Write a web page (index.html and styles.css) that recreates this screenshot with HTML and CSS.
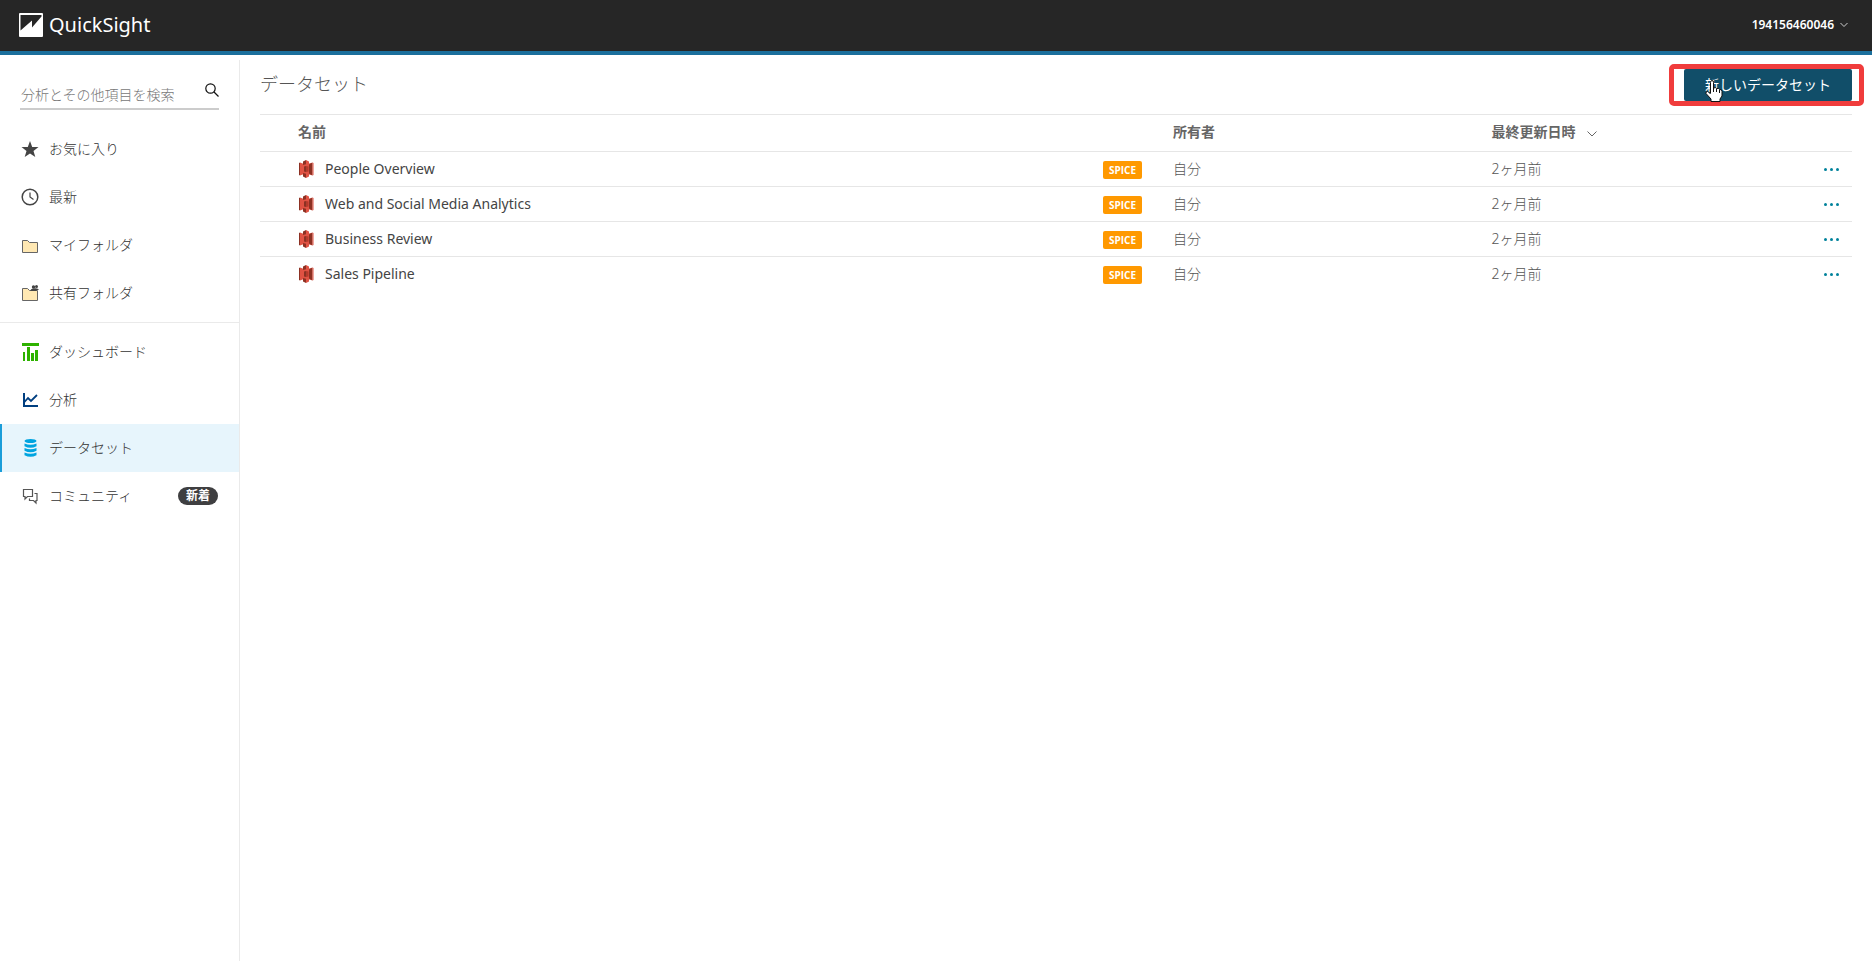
FILE: index.html
```html
<!DOCTYPE html>
<html lang="ja">
<head>
    <meta charset="utf-8" />
    <meta name="viewport" content="width=device-width, initial-scale=1" />
    <title>QuickSight</title>
    <link rel="stylesheet" href="styles.css">
</head>
<body>
    <svg width="0" height="0" class="defs">
        <symbol id="s3" viewBox="0 0 16 18">
            <path fill="#8c3123" d="M2 2.500L1 3v12l1 .5z"/>
            <path fill="#e05243" d="M2 2.500l4 1.500v10l-4 1.500zM14.500 2.500l1 .5v12l-1 .5z"/>
            <path fill="#b5392b" d="M14.500 2.500L10 4v10l4.500 1.500z"/>
            <path fill="#e05243" d="M5 4h6v10H5z"/>
            <path fill="#8c3123" d="M8 0L5 1.500V5l3-.7zM8 18l-3-1.500V13l3 .7zM8 6L6 6.500v5l2 .5zM11 5l3-2v12l-3-2z"/>
            <path fill="#e05243" d="M8 0l3 1.500V5l-3-.7zM8 18l3-1.500V13l-3 .7z"/>
            <path fill="#b5392b" d="M8 6l2.500.5v5L8 12z"/>
        </symbol>
    </svg>

    <header class="topbar">
        <a href="#" class="brand">
            <svg width="24" height="24" viewBox="0 0 24 24">
                <rect width="24" height="24" rx="1" fill="#fff"/>
                <path fill="#262626" d="M1.500 2H22.500V3.500L13 14.500V7.500L1.500 17.500z"/>
            </svg>
            <span>QuickSight</span>
        </a>
        <button type="button" class="account">
            194156460046
            <svg width="8" height="6" viewBox="0 0 8 6"><path d="M.5 1L4 4.500 7.500 1" fill="none" stroke="#ccc"/></svg>
        </button>
    </header>

    <div class="page">
        <aside class="sidebar">
            <form class="search">
                <input type="text" aria-label="検索" placeholder="分析とその他項目を検索" />
                <button type="button" aria-label="検索">
                    <svg width="14" height="14" viewBox="0 0 14 14" fill="none" stroke="#111" stroke-width="1.200"><circle cx="5.500" cy="5.500" r="4.700"/><path d="M9 9l4.500 4.500"/></svg>
                </button>
            </form>
            <nav>
                <ul class="menu">
                    <li><a href="#">
                        <svg width="18" height="18" viewBox="0 0 18 18"><path fill="#444" d="M9 1l2.200 5.900 6.300.2-5 3.800 1.800 6.100L9 13.500 3.700 17l1.800-6.100-5-3.800 6.300-.2z"/></svg>
                        お気に入り</a></li>
                    <li><a href="#">
                        <svg width="18" height="18" viewBox="0 0 18 18" fill="none" stroke="#444"><circle cx="9" cy="9" r="7.800" stroke-width="1.500"/><path d="M9 4.500V9l3.500 2.500" stroke-width="1.200"/></svg>
                        最新</a></li>
                    <li><a href="#">
                        <svg width="18" height="18" viewBox="0 0 18 18"><path fill="#ffe8b3" stroke="#666" d="M1.500 4.500h5l2 2h8v10h-15z"/></svg>
                        マイフォルダ</a></li>
                    <li><a href="#">
                        <svg width="18" height="18" viewBox="0 0 18 18"><path fill="#ffe8b3" stroke="#666" d="M1.500 4.500h5l2 2h8v10h-15z"/><path fill="#fff" d="M9 1h9v5H9z"/><circle cx="12.500" cy="3" r="1.700" fill="#444"/><circle cx="15.500" cy="2.500" r="1.500" fill="#444"/><path fill="#444" d="M9.500 7q0-2.500 3-2.500Q15 4 17.500 5v1h-2v1z"/></svg>
                        共有フォルダ</a></li>
                </ul>
                <ul class="menu">
                    <li><a href="#">
                        <svg width="18" height="18" viewBox="0 0 18 18" fill="#2eb200"><path d="M1 0h17v3H1zM2 9h2v9H2zM6 4h3v14H6zM10 10h3v8h-3zM14 7h3v11h-3z"/></svg>
                        ダッシュボード</a></li>
                    <li><a href="#">
                        <svg width="18" height="18" viewBox="0 0 18 18" fill="none" stroke="#003f80"><path stroke-width="2" d="M3 2v13h14"/><path stroke-width="1.800" d="M3 11.500l4-4.500 3 3 6-6"/></svg>
                        分析</a></li>
                    <li class="active"><a href="#">
                        <svg width="18" height="18" viewBox="0 0 18 18" fill="#00a4e0"><ellipse cx="9.500" cy="2" rx="6" ry="2"/><path d="M3.500 4.500q6 2.500 12 0v2.700q-6 3.300-12 0zM3.500 9q6 2.500 12 0v2.700q-6 3.300-12 0zM3.500 13.500q6 2.500 12 0v2.700q-6 3.300-12 0z"/></svg>
                        データセット</a></li>
                    <li><a href="#">
                        <svg width="18" height="18" viewBox="0 0 18 18" fill="none" stroke="#555" stroke-width="1.200"><path d="M2.500 2.500h9v7H6.500L4 12V9.500H2.500z"/><path d="M13.500 6.500H16v7h-1V16l-2.500-2.500h-4v-2"/></svg>
                        コミュニティ <span class="badge">新着</span></a></li>
                </ul>
            </nav>
        </aside>

        <main class="content">
            <div class="title-row">
                <h1>データセット</h1>
                <div class="new-dataset">
                    <button type="button" class="primary">新しいデータセット</button>
                    <svg class="cursor" width="18" height="22" viewBox="0 0 18 22"><path fill="#fff" stroke="#111" d="M5.500 13V2.500q0-2 1.500-2t1.500 2V8q3-1 3 .5 2.500-.5 3 1 2.500-.5 2.500 2V16l-2 3v2.500h-9V19L1 13.500q-.5-2 1.500-2 1 0 3 2.500M8.500 8v4M11.500 9v3M14.500 10v3"/></svg>
                </div>
            </div>

            <table class="datasets">
                <colgroup>
                    <col><col class="col-owner"><col class="col-date"><col class="col-more">
                </colgroup>
                <thead>
                    <tr>
                        <th>名前</th>
                        <th>所有者</th>
                        <th>最終更新日時 <svg width="10" height="6" viewBox="0 0 10 6"><path d="M.5 .5L5 5 9.500 .5" fill="none" stroke="#666"/></svg></th>
                        <th></th>
                    </tr>
                </thead>
                <tbody>
                    <tr>
                        <td><div class="name"><svg width="16" height="18"><use href="#s3"/></svg><a href="#">People Overview</a><span class="spice">SPICE</span></div></td>
                        <td>自分</td>
                        <td>2ヶ月前</td>
                        <td><button type="button" class="more" aria-label="その他"><i></i><i></i><i></i></button></td>
                    </tr>
                    <tr>
                        <td><div class="name"><svg width="16" height="18"><use href="#s3"/></svg><a href="#">Web and Social Media Analytics</a><span class="spice">SPICE</span></div></td>
                        <td>自分</td>
                        <td>2ヶ月前</td>
                        <td><button type="button" class="more" aria-label="その他"><i></i><i></i><i></i></button></td>
                    </tr>
                    <tr>
                        <td><div class="name"><svg width="16" height="18"><use href="#s3"/></svg><a href="#">Business Review</a><span class="spice">SPICE</span></div></td>
                        <td>自分</td>
                        <td>2ヶ月前</td>
                        <td><button type="button" class="more" aria-label="その他"><i></i><i></i><i></i></button></td>
                    </tr>
                    <tr>
                        <td><div class="name"><svg width="16" height="18"><use href="#s3"/></svg><a href="#">Sales Pipeline</a><span class="spice">SPICE</span></div></td>
                        <td>自分</td>
                        <td>2ヶ月前</td>
                        <td><button type="button" class="more" aria-label="その他"><i></i><i></i><i></i></button></td>
                    </tr>
                </tbody>
            </table>
        </main>
    </div>
</body>
</html>
```
FILE: styles.css
```css
*{
    box-sizing:border-box;
    margin:0;
    padding:0;
}
body{
    min-height:100vh;
    display:flex;
    flex-direction:column;
    background:#fff;
    color:#444;
    font-family:"Noto Sans","Noto Sans CJK JP",sans-serif;
    font-size:14px;
    line-height:20px;
}
a{
    color:inherit;
    text-decoration:none;
}
button{
    border:0;
    background:none;
    font:inherit;
    color:inherit;
    cursor:pointer;
}
svg{
    flex:none;
}
.defs{
    position:absolute;
}

/* header */
.topbar{
    display:flex;
    align-items:center;
    justify-content:space-between;
    height:55px;
    padding:0 24px 2px 19px;
    background:#262626;
    border-bottom:4px solid #1b6f9c;
    color:#fff;
}
.brand{
    display:flex;
    align-items:center;
    gap:6px;
    font-size:20px;
}
.account{
    display:flex;
    align-items:center;
    gap:6px;
    font-size:12px;
    font-weight:600;
}

.page{
    flex:1;
    display:flex;
    padding-top:5px;
}

/* sidebar */
.sidebar{
    flex:none;
    width:240px;
    border-right:1px solid #eaeaea;
}
.search{
    display:flex;
    align-items:center;
    height:50px;
    margin:0 20px 15px;
    border-bottom:2px solid #ccc;
}
.search input{
    flex:1;
    min-width:0;
    padding:21px 0 0 1px;
    border:0;
    outline:none;
    background:none;
    font:inherit;
    font-weight:300;
}
.search input::placeholder{
    color:#777;
}
.search button{
    display:flex;
    padding-top:12px;
}
.menu{
    list-style:none;
}
.menu + .menu{
    margin-top:5px;
    padding-top:5px;
    border-top:1px solid #eaeaea;
}
.menu a{
    display:flex;
    align-items:center;
    gap:10px;
    height:48px;
    padding:0 21px;
    color:#333;
    font-weight:300;
}
.menu .active a{
    padding-left:19px;
    border-left:2px solid #1a9dd9;
    background:#e7f5fc;
}
.badge{
    margin-left:auto;
    padding:0 8px;
    border-radius:9px;
    background:#3f3f41;
    color:#fff;
    font-size:12px;
    font-weight:700;
    line-height:18px;
}

/* datasets */
.content{
    flex:1;
    min-width:0;
    padding:0 20px;
}
.title-row{
    display:flex;
    align-items:center;
    justify-content:space-between;
    height:54px;
    padding-bottom:4px;
}
.title-row h1{
    padding-bottom:2px;
    color:#555;
    font-size:18px;
    font-weight:300;
}
.new-dataset{
    position:relative;
    margin-right:-12px;
    padding:0 7px 0 10px;
    border:5px solid #f03c3c;
    border-radius:5px;
}
.primary{
    display:block;
    padding:0 21px 1px;
    border-radius:2px;
    background:#114e69;
    color:#fff;
    line-height:31px;
}
.cursor{
    position:absolute;
    left:31px;
    top:11px;
}
.datasets{
    width:100%;
    table-layout:fixed;
    border-collapse:collapse;
}
.col-owner{
    width:20%;
}
.col-date{
    width:18%;
}
.col-more{
    width:74px;
}
.datasets tr{
    height:35px;
    border-top:1px solid #e6e6e6;
}
.datasets thead tr{
    height:37px;
}
.datasets th{
    padding-bottom:2px;
    color:#666;
    font-weight:700;
    text-align:left;
}
.datasets th:first-child,
.datasets td:first-child{
    padding-left:38px;
}
.datasets th svg{
    margin-left:8px;
}
.datasets td{
    color:#555;
    font-weight:300;
}
.name{
    display:flex;
    align-items:center;
    padding-right:31px;
}
.name a{
    margin-left:11px;
    color:#444;
    font-weight:400;
}
.spice{
    margin:2px 0 0 auto;
    padding:0 6px;
    border-radius:2px;
    background:#ff9900;
    color:#fff;
    font-family:"Open Sans","Noto Sans",sans-serif;
    font-size:10px;
    font-weight:700;
    line-height:18px;
}
.more{
    display:flex;
    gap:3px;
    margin-left:auto;
    padding:8px 13px;
}
.more i{
    width:3px;
    height:3px;
    border-radius:50%;
    background:#00829b;
}
```
